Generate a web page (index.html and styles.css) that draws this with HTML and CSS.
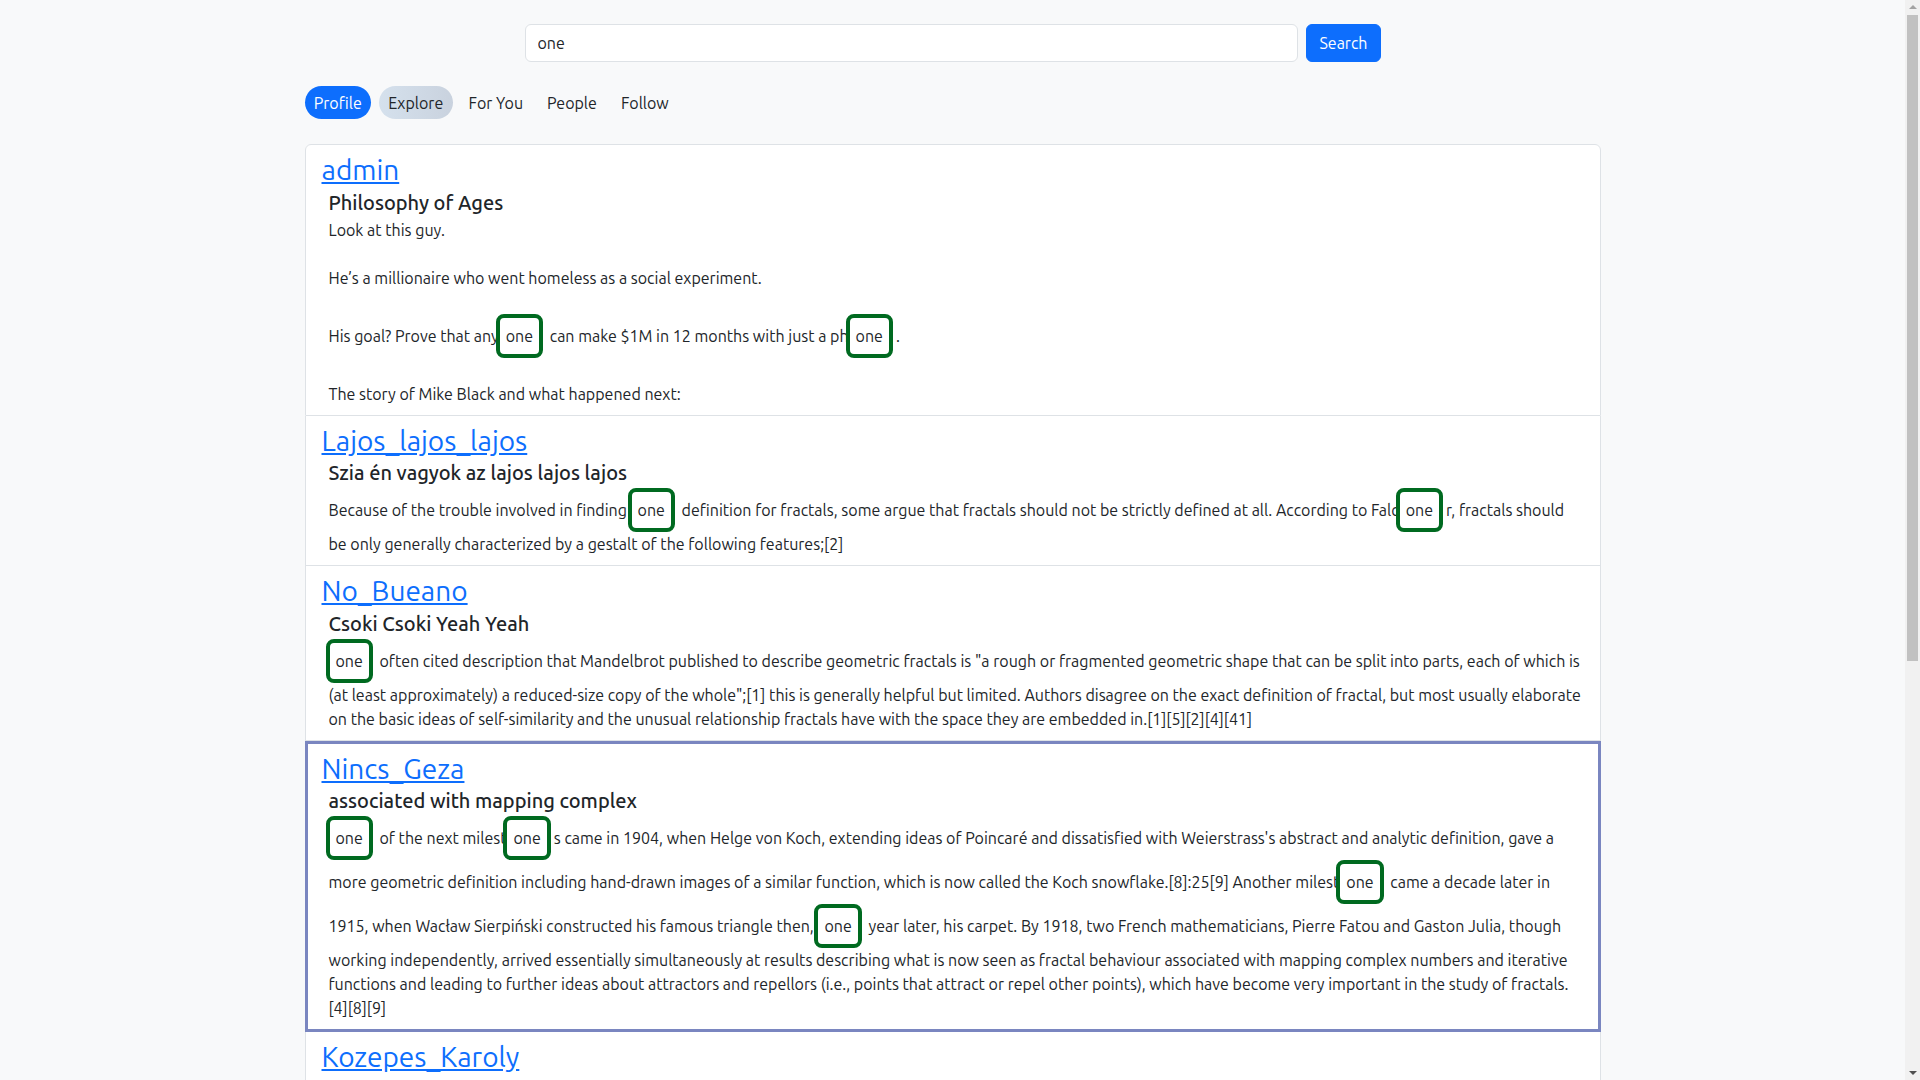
FILE: index.html
```html
<!DOCTYPE html>
<html lang="en">
<head>
<meta charset="utf-8">
<title>Search</title>
<link rel="stylesheet" href="styles.css">
</head>
<body>
<div class="container">
  <form class="search">
    <input class="search-input" type="text" value="one">
    <button class="search-btn" type="button">Search</button>
  </form>
  <nav class="pills">
    <a class="pill pill-active" href="#">Profile</a>
    <a class="pill pill-soft" href="#">Explore</a>
    <a class="pill" href="#">For You</a>
    <a class="pill" href="#">People</a>
    <a class="pill" href="#">Follow</a>
  </nav>
  <div class="results">
    <div class="item">
      <h3 class="user"><a href="#">admin</a></h3>
      <h5 class="title">Philosophy of Ages</h5>
      <p class="text">Look at this guy.<br><br>He’s a millionaire who went homeless as a social experiment.<br><br>His goal? Prove that any<mark class="hit">one</mark> can make $1M in 12 months with just a ph<mark class="hit">one</mark>.<br><br>The story of Mike Black and what happened next:</p>
    </div>
    <div class="item">
      <h3 class="user"><a href="#">Lajos_lajos_lajos</a></h3>
      <h5 class="title">Szia én vagyok az lajos lajos lajos</h5>
      <p class="text">Because of the trouble involved in finding <mark class="hit">one</mark> definition for fractals, some argue that fractals should not be strictly defined at all. According to Falc<mark class="hit">one</mark>r, fractals should be only generally characterized by a gestalt of the following features;[2]</p>
    </div>
    <div class="item">
      <h3 class="user"><a href="#">No_Bueano</a></h3>
      <h5 class="title">Csoki Csoki Yeah Yeah</h5>
      <p class="text"><mark class="hit">one</mark> often cited description that Mandelbrot published to describe geometric fractals is "a rough or fragmented geometric shape that can be split into parts, each of which is (at least approximately) a reduced-size copy of the whole";[1] this is generally helpful but limited. Authors disagree on the exact definition of fractal, but most usually elaborate on the basic ideas of self-similarity and the unusual relationship fractals have with the space they are embedded in.[1][5][2][4][41]</p>
    </div>
    <div class="item item-selected">
      <h3 class="user"><a href="#">Nincs_Geza</a></h3>
      <h5 class="title">associated with mapping complex</h5>
      <p class="text"><mark class="hit">one</mark> of the next milest<mark class="hit">one</mark>s came in 1904, when Helge von Koch, extending ideas of Poincaré and dissatisfied with Weierstrass's abstract and analytic definition, gave a more geometric definition including hand-drawn images of a similar function, which is now called the Koch snowflake.[8]:25[9] Another milest<mark class="hit">one</mark> came a decade later in 1915, when Wacław Sierpiński constructed his famous triangle then, <mark class="hit">one</mark> year later, his carpet. By 1918, two French mathematicians, Pierre Fatou and Gaston Julia, though working independently, arrived essentially simultaneously at results describing what is now seen as fractal behaviour associated with mapping complex numbers and iterative functions and leading to further ideas about attractors and repellors (i.e., points that attract or repel other points), which have become very important in the study of fractals.[4][8][9]</p>
    </div>
    <div class="item">
      <h3 class="user"><a href="#">Kozepes_Karoly</a></h3>
      <h5 class="title">Fractals in nature</h5>
      <p class="text">Approximate fractals found in nature display self-similarity over extended, but finite, scale ranges. The connection between fractals and leaves, for instance, is currently being used to determine how much carbon is contained in trees. Phenomena known to have fractal features include river networks, fault lines, mountain ranges, craters, lightning bolts, coastlines, and snowflakes, where n<mark class="hit">one</mark> of the structures is exactly self-similar, yet each <mark class="hit">one</mark> shows statistical self-similarity across a range of scales.<br><br>Fractal patterns have been modeled extensively, albeit within a range of scales rather than infinitely, owing to the practical limits of physical time and space. Models may simulate theoretical fractals or natural phenomena with fractal features. The outputs of the modelling process may be highly artistic renderings, outputs for investigation, or benchmarks for fractal analysis.</p>
    </div>
    <div class="item">
      <h3 class="user"><a href="#">Kis_Pista</a></h3>
      <h5 class="title">Iterated function systems</h5>
      <p class="text">Fractals can be generated by iteration: repeating <mark class="hit">one</mark> geometric replacement rule again and again. Cantor set, Sierpinski carpet, Sierpinski gasket, Peano curve, Koch snowflake, Harter-Heighway dragon curve, T-square and the Menger sponge are some examples of such fractals.<br><br>Strange attractors are generated by iteration of a map or the solution of a system of initial-value differential or difference equations that exhibit chaos.</p>
    </div>
  </div>
</div>
<div class="scrollbar" aria-hidden="true">
  <span class="sb-arrow sb-up"></span>
  <span class="sb-thumb"></span>
  <span class="sb-arrow sb-down"></span>
</div>
</body>
</html>
```
FILE: styles.css
```css
html, body {
  margin: 0;
  padding: 0;
}

body {
  box-sizing: border-box;
  padding-right: 15px;
  background: #f8f9fa;
  color: #212529;
  font-family: "Ubuntu", "Roboto", "Liberation Sans", sans-serif;
  font-size: 16px;
  line-height: 1.5;
}

.container {
  box-sizing: border-box;
  max-width: 1320px;
  margin: 0 auto;
  padding: 0 12px 40px;
}

.search {
  display: flex;
  gap: 8px;
  width: 856px;
  margin: 24px auto 0;
}

.search-input {
  flex: 1;
  box-sizing: border-box;
  height: 38px;
  padding: 6px 12px;
  font: inherit;
  color: #212529;
  background: #fff;
  border: 1px solid #dee2e6;
  border-radius: 6px;
  outline: none;
}

.search-btn {
  box-sizing: border-box;
  height: 38px;
  padding: 6px 12px;
  font: inherit;
  color: #fff;
  background: #0d6efd;
  border: 1px solid #0d6efd;
  border-radius: 6px;
}

.pills {
  display: flex;
  gap: 8px;
  margin-top: 24px;
}

.pill {
  display: block;
  padding: 4.5px 8px;
  line-height: 24px;
  color: #212529;
  text-decoration: none;
  border-radius: 20px;
}

.pill-active {
  padding: 4.5px 9.25px;
  background: #0d6efd;
  color: #fff;
}

.pill-soft {
  padding: 4.5px 9.25px;
  background: linear-gradient(90deg, #d5e1ed, #c9d2de);
}

.results {
  margin-top: 25px;
  background: #fff;
  border-radius: 6px 6px 0 0;
}

.item {
  padding: 8px 16px 9px;
  border: 1px solid #dee2e6;
  border-top-width: 0;
  background: #fff;
}

.item:first-child {
  border-top-width: 1px;
  border-radius: 6px 6px 0 0;
}

.item-selected {
  border: 3px solid #7a86c0;
  padding: 8px 14px 9px;
}

.user {
  margin: 0 0 4px;
  font-size: 28px;
  font-weight: 400;
  line-height: 1.2;
}

.user a {
  color: #0d6efd;
  text-decoration: underline;
}

.title {
  margin: 0 0 3px;
  padding-left: 7px;
  font-size: 20px;
  font-weight: 500;
  line-height: 1.2;
}

.text {
  margin: 0;
  padding-left: 7px;
}

.hit {
  display: inline-block;
  padding: 6px 6px;
  margin: 0 3px 0 -3px;
  line-height: 24px;
  color: #212529;
  background: transparent;
  border: 4px solid #006a20;
  border-radius: 8px;
}

.scrollbar {
  position: fixed;
  top: 0;
  right: 0;
  bottom: 0;
  width: 15px;
  background: #f1f1f1;
  display: flex;
  flex-direction: column;
  align-items: center;
}

.sb-arrow {
  display: block;
  width: 0;
  height: 0;
  border-left: 4px solid transparent;
  border-right: 4px solid transparent;
}

.sb-up {
  margin-top: 5px;
  border-bottom: 4px solid #a3a3a3;
}

.sb-down {
  margin-top: auto;
  margin-bottom: 5px;
  border-top: 4px solid #505050;
}

.sb-thumb {
  display: block;
  width: 11px;
  height: 646px;
  margin-top: 6px;
  background: #c1c1c1;
}
```
